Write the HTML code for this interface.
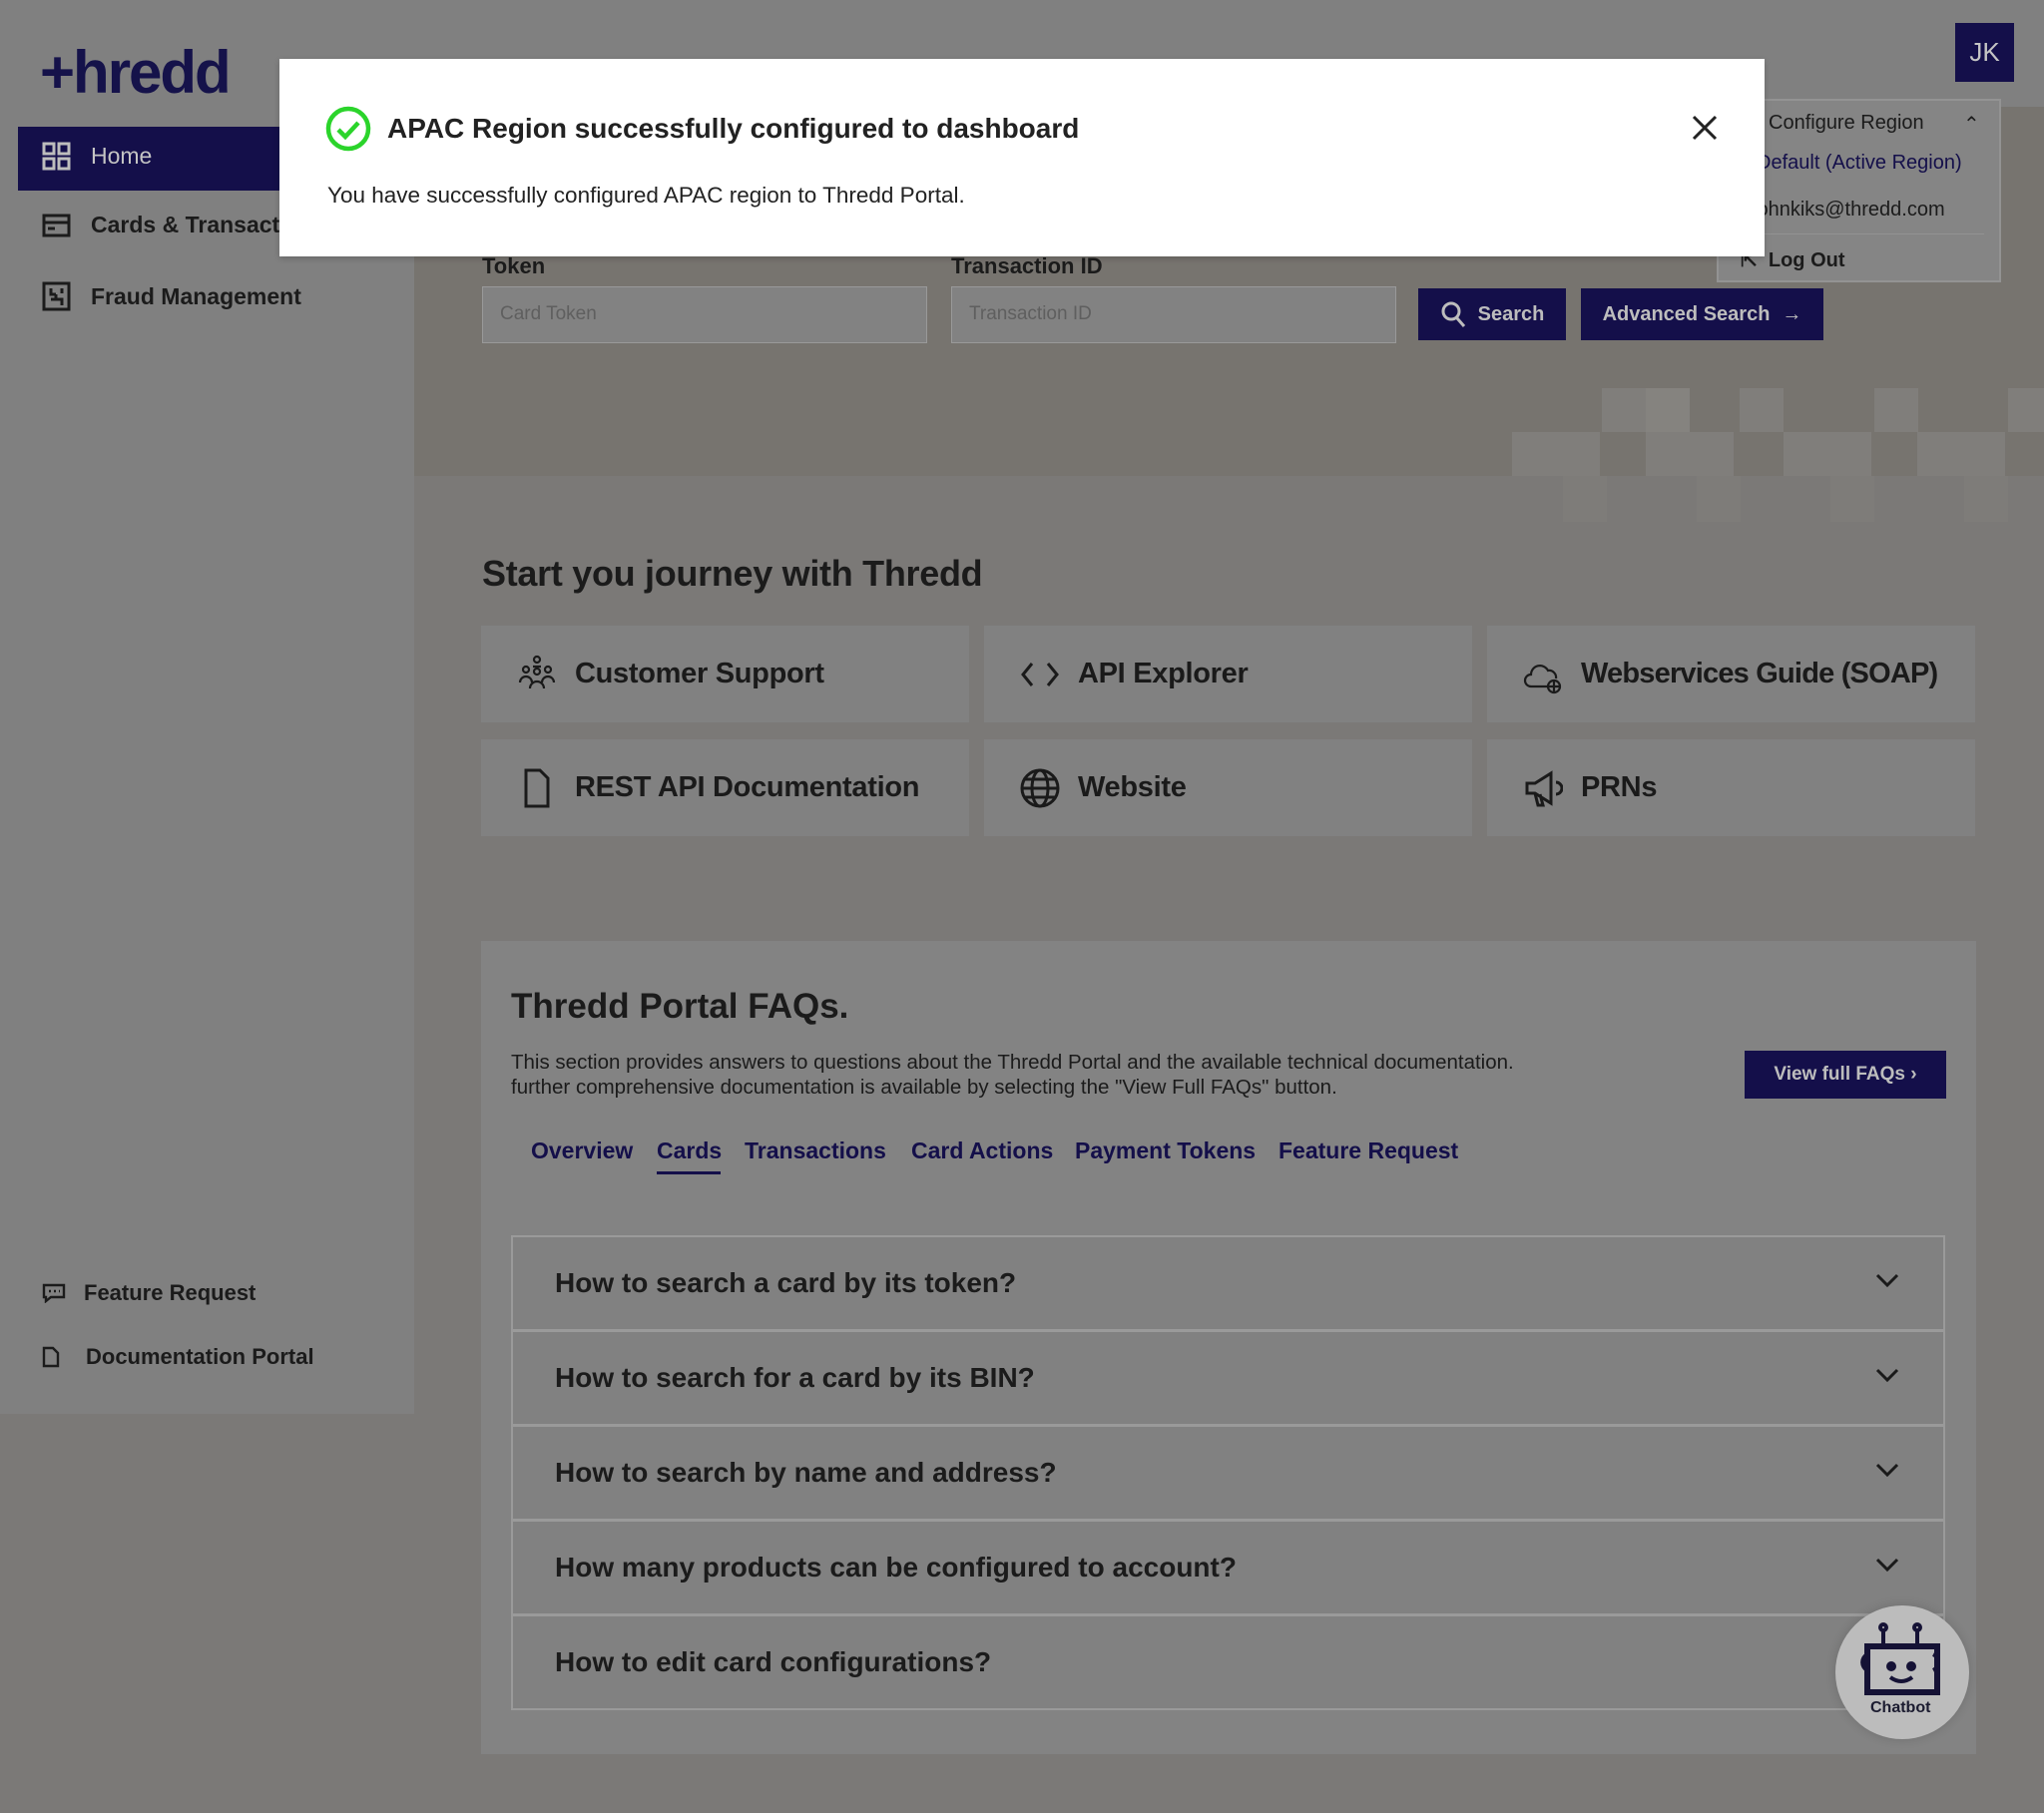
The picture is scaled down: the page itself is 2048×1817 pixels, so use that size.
<!DOCTYPE html>
<html><head><meta charset="utf-8"><style>
*{box-sizing:border-box;margin:0;padding:0}
body{width:2048px;height:1817px;position:relative;background:#7b7977;font-family:"Liberation Sans",sans-serif;color:#1b1b1b;overflow:hidden}
.a{position:absolute}
.top{left:0;top:0;width:2048px;height:107px;background:#808080}
.side{left:0;top:0;width:415px;height:1417px;background:#808080}
.nav{left:42px;font-size:23px;display:flex;align-items:center;gap:20px;color:#1b1b1b}
.hero{left:415px;top:107px;width:1633px;height:370px;background:#77746f}
.sq{position:absolute;width:44px;height:44px;background:#807e7b}
.lbl{font-size:22px;font-weight:bold;top:254px}
.inp{top:287px;width:446px;height:57px;background:#828282;border:1px solid #999;font-size:19px;color:#5f5f5f;padding:16px 17px}
.btn{background:#140f4a;color:#bdbdbd;font-size:20px;font-weight:bold;display:flex;align-items:center;justify-content:center;gap:12px}
.tile{background:#818181;width:489px;height:97px;display:flex;align-items:center;padding-left:36px;gap:18px;font-size:29px;font-weight:bold;color:#1a1a1a;letter-spacing:-0.3px}
.faq{left:482px;top:943px;width:1498px;height:815px;background:#838383}
.tab{top:1140px;font-size:23px;color:#140f4a;font-weight:bold}
.acc{left:512px;width:1437px;height:96px;border:2px solid #9a9a9a;background:#818181;font-size:28px;font-weight:bold;display:flex;align-items:center;padding-left:42px}
.chev{position:absolute;right:44px;top:36px}
</style></head><body>
<div class="a top"></div>
<div class="a side"></div>
<div class="a" style="left:40px;top:38px;font-size:60px;font-weight:bold;color:#15124a;letter-spacing:-2px">+hredd</div>
<div class="a" style="left:18px;top:127px;width:400px;height:64px;background:#140f4a"></div>
<div class="a nav" style="top:142px;color:#c4c4c4;left:42px">
<svg width="29" height="29" viewBox="0 0 29 29" fill="none" stroke="#bdbdbd" stroke-width="3"><rect x="2" y="2" width="10" height="10"/><rect x="17" y="2" width="10" height="10"/><rect x="2" y="17" width="10" height="10"/><rect x="17" y="17" width="10" height="10"/></svg><span>Home</span></div>
<div class="a nav" style="top:212px"><svg width="29" height="24" viewBox="0 0 29 24" fill="none" stroke="#1b1b1b" stroke-width="3"><rect x="2" y="2" width="25" height="20"/><line x1="2" y1="9" x2="27" y2="9"/><line x1="6" y1="15" x2="13" y2="15"/></svg><span style="font-weight:bold">Cards &amp; Transactions</span></div>
<div class="a nav" style="top:282px"><svg width="29" height="30" viewBox="0 0 29 30" fill="none" stroke="#1b1b1b" stroke-width="3"><rect x="2" y="2" width="25" height="26"/><path d="M9 7v6h5M20 7v5M9 18h11v6M14 13v5"/></svg><span style="font-weight:bold">Fraud Management</span></div>
<div class="a nav" style="top:1283px;gap:18px;font-weight:bold;font-size:22px"><svg width="24" height="20" viewBox="0 0 24 20" fill="none" stroke="#1b1b1b" stroke-width="2.4"><path d="M2 2h20v12H9l-5 4v-4H2z"/><path d="M7 8h2M12 8h2M17 8h1"/></svg><span>Feature Request</span></div>
<div class="a nav" style="top:1347px;gap:26px;font-weight:bold;font-size:22px"><svg width="18" height="22" viewBox="0 0 18 22" fill="none" stroke="#1b1b1b" stroke-width="2.4"><path d="M2 2h9l5 5v13H2z"/></svg><span>Documentation Portal</span></div>

<div class="a hero">
<div class="sq" style="left:1190px;top:282px"></div><div class="sq" style="left:1234px;top:282px;background:#85837f"></div>
<div class="sq" style="left:1328px;top:282px"></div><div class="sq" style="left:1463px;top:282px"></div><div class="sq" style="left:1597px;top:282px"></div>
<div class="sq" style="left:1100px;top:326px"></div><div class="sq" style="left:1144px;top:326px"></div><div class="sq" style="left:1234px;top:326px"></div><div class="sq" style="left:1278px;top:326px"></div><div class="sq" style="left:1372px;top:326px"></div><div class="sq" style="left:1416px;top:326px"></div><div class="sq" style="left:1506px;top:326px"></div><div class="sq" style="left:1550px;top:326px"></div>
</div>
<div class="a" style="left:1566px;top:477px;width:44px;height:46px;background:#7e7c79"></div>
<div class="a" style="left:1700px;top:477px;width:44px;height:46px;background:#7e7c79"></div>
<div class="a" style="left:1834px;top:477px;width:44px;height:46px;background:#7e7c79"></div>
<div class="a" style="left:1968px;top:477px;width:44px;height:46px;background:#7e7c79"></div>

<div class="a lbl" style="left:483px">Token</div>
<div class="a lbl" style="left:953px">Transaction ID</div>
<div class="a inp" style="left:483px">Card Token</div>
<div class="a inp" style="left:953px">Transaction ID</div>
<div class="a btn" style="left:1421px;top:289px;width:148px;height:52px"><svg width="26" height="28" viewBox="0 0 26 28" fill="none" stroke="#bdbdbd" stroke-width="3"><circle cx="11" cy="11" r="8"/><path d="M17 18l7 8"/></svg>Search</div>
<div class="a btn" style="left:1584px;top:289px;width:243px;height:52px">Advanced Search <span style="font-weight:normal">→</span></div>

<div class="a" style="left:1959px;top:23px;width:59px;height:59px;background:#140f4a;color:#c4c4c4;font-size:26px;display:flex;align-items:center;justify-content:center">JK</div>
<div class="a" style="left:1720px;top:99px;width:285px;height:184px;background:#858585;border:2px solid #939393"></div>
<div class="a" style="left:1772px;top:112px;font-size:20px">Configure Region</div>
<div class="a" style="left:1967px;top:112px;font-size:20px">⌃</div>
<div class="a" style="left:1760px;top:152px;font-size:20px;color:#140f4a">Default (Active Region)</div>
<div class="a" style="left:1756px;top:199px;font-size:20px">johnkiks@thredd.com</div>
<div class="a" style="left:1738px;top:234px;width:250px;height:1px;background:#929292"></div>
<div class="a" style="left:1744px;top:248px;font-size:20px;font-weight:bold">⇱ &nbsp;Log Out</div>

<div class="a" style="left:280px;top:59px;width:1488px;height:198px;background:#fff;box-shadow:0 2px 6px rgba(0,0,0,.2)"></div>
<svg class="a" style="left:326px;top:106px" width="46" height="46" viewBox="0 0 46 46" fill="none" stroke="#2bd42b" stroke-width="4.5"><circle cx="23" cy="23" r="20"/><path d="M13 24l7 7 13-14"/></svg>
<div class="a" style="left:388px;top:113px;font-size:28px;font-weight:bold;color:#222">APAC Region successfully configured to dashboard</div>
<div class="a" style="left:328px;top:183px;font-size:22.5px;color:#222">You have successfully configured APAC region to Thredd Portal.</div>
<svg class="a" style="left:1695px;top:115px" width="26" height="26" viewBox="0 0 26 26" stroke="#222" stroke-width="3"><path d="M2 2l22 22M24 2L2 24"/></svg>

<div class="a" style="left:483px;top:554px;font-size:36px;font-weight:bold;letter-spacing:-0.3px">Start you journey with Thredd</div>
<div class="a tile" style="left:482px;top:627px"><svg width="40" height="40" viewBox="0 0 40 40" fill="none" stroke="#1a1a1a" stroke-width="2.2"><circle cx="20" cy="5" r="3"/><circle cx="9" cy="15" r="3"/><circle cx="31" cy="15" r="3"/><circle cx="20" cy="17" r="3"/><path d="M3 28a6 6 0 0 1 12 0M25 28a6 6 0 0 1 12 0M13 34a7 7 0 0 1 14 0M16 12h8"/></svg>Customer Support</div>
<div class="a tile" style="left:986px;top:627px"><svg width="40" height="30" viewBox="0 0 40 30" fill="none" stroke="#1a1a1a" stroke-width="3"><path d="M12 4L3 15l9 11M28 4l9 11-9 11"/></svg>API Explorer</div>
<div class="a tile" style="left:1490px;top:627px"><svg width="40" height="40" viewBox="0 0 40 40" fill="none" stroke="#1a1a1a" stroke-width="2.2"><path d="M24 32H8a6 6 0 0 1 0-12 9 9 0 0 1 17-4 7 7 0 0 1 8 8"/><circle cx="31" cy="32" r="6"/><path d="M25 32h12M31 26v12"/></svg><span style="letter-spacing:-0.8px">Webservices Guide (SOAP)</span></div>
<div class="a tile" style="left:482px;top:741px"><svg width="40" height="40" viewBox="0 0 40 40" fill="none" stroke="#1a1a1a" stroke-width="3"><path d="M9 2h14l8 8v28H9z"/></svg>REST API Documentation</div>
<div class="a tile" style="left:986px;top:741px"><svg width="40" height="40" viewBox="0 0 40 40" fill="none" stroke="#1a1a1a" stroke-width="3"><circle cx="20" cy="20" r="18"/><ellipse cx="20" cy="20" rx="8" ry="18"/><path d="M2 20h36M5 11h30M5 29h30"/></svg>Website</div>
<div class="a tile" style="left:1490px;top:741px"><svg width="40" height="40" viewBox="0 0 40 40" fill="none" stroke="#1a1a1a" stroke-width="3"><path d="M4 15h8l16-10v30L12 25H4zM12 25l3 12h5l-3-11M33 14a6 6 0 0 1 0 12"/></svg>PRNs</div>

<div class="a faq"></div>
<div class="a" style="left:512px;top:989px;font-size:35px;font-weight:bold">Thredd Portal FAQs.</div>
<div class="a" style="left:512px;top:1052px;font-size:20.5px;line-height:25px">This section provides answers to questions about the Thredd Portal and the available technical documentation.<br>further comprehensive documentation is available by selecting the "View Full FAQs" button.</div>
<div class="a btn" style="left:1748px;top:1053px;width:202px;height:48px;font-size:19px">View full FAQs ›</div>
<div class="a tab" style="left:532px">Overview</div>
<div class="a tab" style="left:658px">Cards</div>
<div class="a" style="left:658px;top:1174px;width:64px;height:3px;background:#140f4a"></div>
<div class="a tab" style="left:746px">Transactions</div>
<div class="a tab" style="left:913px">Card Actions</div>
<div class="a tab" style="left:1077px">Payment Tokens</div>
<div class="a tab" style="left:1281px">Feature Request</div>

<div class="a acc" style="top:1238px">How to search a card by its token?<svg class="chev" width="24" height="14" viewBox="0 0 24 14" fill="none" stroke="#1a1a1a" stroke-width="3"><path d="M2 2l10 10 10-10"/></svg></div>
<div class="a acc" style="top:1333px">How to search for a card by its BIN?<svg class="chev" width="24" height="14" viewBox="0 0 24 14" fill="none" stroke="#1a1a1a" stroke-width="3"><path d="M2 2l10 10 10-10"/></svg></div>
<div class="a acc" style="top:1428px">How to search by name and address?<svg class="chev" width="24" height="14" viewBox="0 0 24 14" fill="none" stroke="#1a1a1a" stroke-width="3"><path d="M2 2l10 10 10-10"/></svg></div>
<div class="a acc" style="top:1523px">How many products can be configured to account?<svg class="chev" width="24" height="14" viewBox="0 0 24 14" fill="none" stroke="#1a1a1a" stroke-width="3"><path d="M2 2l10 10 10-10"/></svg></div>
<div class="a acc" style="top:1618px">How to edit card configurations?</div>

<div class="a" style="left:1839px;top:1609px;width:134px;height:134px;border-radius:50%;background:#bcbcbc;box-shadow:0 0 10px rgba(0,0,0,.15)"></div>
<svg class="a" style="left:1856px;top:1626px" width="100" height="76" viewBox="0 0 100 76" fill="none" stroke="#151235" stroke-width="4"><circle cx="31" cy="5" r="3"/><circle cx="65" cy="5" r="3"/><path d="M31 8v16M65 8v16"/><rect x="22" y="24" width="70" height="46" stroke-width="6" transform="translate(-7 0)"/><path d="M15 32a9 9 0 0 0 0 16M81 32a9 9 0 0 1 0 16"/><circle cx="39" cy="44" r="3" fill="#151235"/><circle cx="59" cy="44" r="3" fill="#151235"/><path d="M38 55q11 8 22 0"/></svg>
<div class="a" style="left:1874px;top:1703px;font-size:16px;font-weight:bold;color:#1c1c30">Chatbot</div>
</body></html>
